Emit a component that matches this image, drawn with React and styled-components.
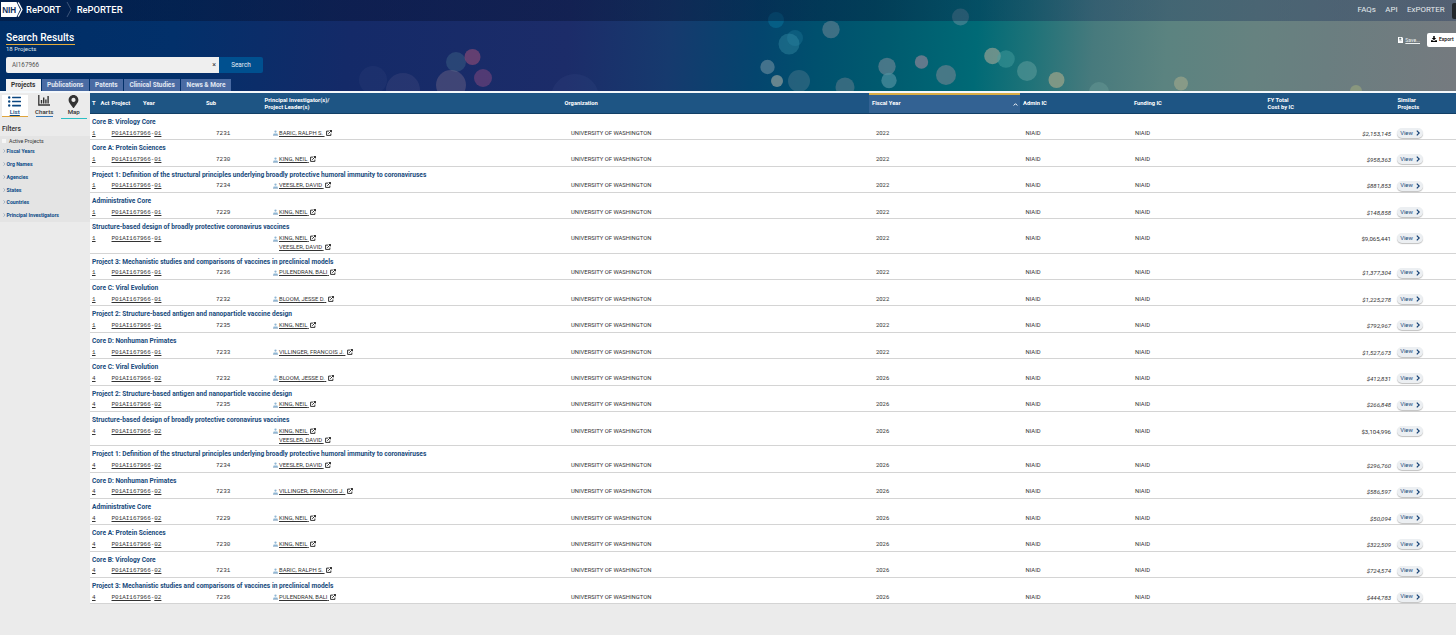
import React from 'react';
import styled, { createGlobalStyle } from 'styled-components';
import { FaListUl, FaMapMarkerAlt } from 'react-icons/fa';

const columns = '10px 11px 31px 62px 58px 300px 307px 151px 111px 134px 130px 1fr';

const titles = {
    7231: 'Core B: Virology Core',
    7230: 'Core A: Protein Sciences',
    7234: 'Project 1: Definition of the structural principles underlying broadly protective humoral immunity to coronaviruses',
    7229: 'Administrative Core',
    7236: 'Project 3: Mechanistic studies and comparisons of vaccines in preclinical models',
    7232: 'Core C: Viral Evolution',
    7235: 'Project 2: Structure-based antigen and nanoparticle vaccine design',
    7233: 'Core D: Nonhuman Primates',
};

const leaders = {
    7231: ['BARIC, RALPH S.'],
    7230: ['KING, NEIL'],
    7234: ['VEESLER, DAVID'],
    7229: ['KING, NEIL'],
    7236: ['PULENDRAN, BALI'],
    7232: ['BLOOM, JESSE D.'],
    7235: ['KING, NEIL'],
    7233: ['VILLINGER, FRANCOIS J.'],
};

const parentTitle = 'Structure-based design of broadly protective coronavirus vaccines';
const parentLeaders = ['KING, NEIL', 'VEESLER, DAVID'];

const projects = [
    { type: 1, sub: 7231, cost: '$2,153,145' },
    { type: 1, sub: 7230, cost: '$958,363' },
    { type: 1, sub: 7234, cost: '$881,853' },
    { type: 1, sub: 7229, cost: '$148,858' },
    { type: 1, cost: '$9,065,441' },
    { type: 1, sub: 7236, cost: '$1,377,304' },
    { type: 1, sub: 7232, cost: '$1,225,278' },
    { type: 1, sub: 7235, cost: '$792,967' },
    { type: 1, sub: 7233, cost: '$1,527,673' },
    { type: 4, sub: 7232, cost: '$412,831' },
    { type: 4, sub: 7235, cost: '$266,848' },
    { type: 4, cost: '$3,104,996' },
    { type: 4, sub: 7234, cost: '$296,760' },
    { type: 4, sub: 7233, cost: '$586,597' },
    { type: 4, sub: 7229, cost: '$50,094' },
    { type: 4, sub: 7230, cost: '$322,509' },
    { type: 4, sub: 7231, cost: '$724,574' },
    { type: 4, sub: 7236, cost: '$444,783' },
];

const filters = ['Fiscal Years', 'Org Names', 'Agencies', 'States', 'Countries', 'Principal Investigators'];

// x, y, radius, colour, opacity
const lights = [
    [456, 62, 10, '#4a7590', 0.35],
    [472.5, 57, 8, '#a05078', 0.55],
    [483, 78, 9, '#8a4a80', 0.5],
    [451, 85, 15, '#8a7590', 0.35],
    [403, 90, 17, '#6a6590', 0.2],
    [373, 80, 14, '#4a5590', 0.15],
    [575, 98, 24, '#50609a', 0.12],
    [776, 20, 8, '#0a80a8', 0.4],
    [789, 44, 10.5, '#3a90a8', 0.4],
    [795, 38, 8, '#3090b0', 0.25],
    [831, 29.5, 8.7, '#5f8090', 0.65],
    [767.5, 67, 7.2, '#5f8598', 0.7],
    [777, 81, 6, '#8a9a9a', 0.75],
    [799, 81, 11, '#5a7f90', 0.4],
    [845, 87, 9.5, '#6a7f90', 0.5],
    [887, 66.5, 8.7, '#5f8090', 0.75],
    [889, 80.5, 7.7, '#5090a0', 0.7],
    [921.5, 62, 6.7, '#7a7f92', 0.8],
    [946, 75, 10, '#5f7f8c', 0.75],
    [960.5, 17, 8.5, '#5a8a9a', 0.6],
    [992.5, 56, 8.3, '#829a90', 0.8],
    [1006, 59, 8.8, '#4aa0a0', 0.45],
    [1027, 71, 10, '#5a9a9a', 0.6],
    [1056.5, 80, 8, '#92a088', 0.8],
    [1099, 92, 10, '#6fa09a', 0.4],
    [1181, 83.5, 7, '#92a088', 0.8],
    [1356, 91, 6, '#93a07e', 0.75],
];

const PersonIcon = () => (
    <svg width="5" height="6" viewBox="0 0 10 12">
        <circle cx="5" cy="3.2" r="2.3" fill="#8fb6d3" />
        <path d="M.5 10V8.4Q.5 7 2 7h6q1.5 0 1.5 1.4V10z" fill="#8fb6d3" />
        <path d="M0 11.3h10" stroke="#6b8fb0" strokeWidth="1.2" />
    </svg>
);

const LinkOutIcon = () => (
    <svg width="6" height="6" viewBox="0 0 12 12" fill="none" stroke="#111" strokeWidth="1.7">
        <path d="M6 2.2H1.2v8.600h8.600V7M4.500 7.500L11 1M7.300 1H11v3.700" />
    </svg>
);

const ChartIcon = () => (
    <svg width="12" height="11" viewBox="0 0 12 11" stroke="#333" fill="none">
        <path d="M.8 0v10H12" strokeWidth="1.3" />
        <path d="M3.5 8.5V5M5.7 8.5V2.5M7.9 8.5V4.5M10.1 8.5V1" strokeWidth="1.4" />
    </svg>
);

const NihLogo = () => (
    <svg width="22" height="15" viewBox="0 0 22 15">
        <path d="M0 0h15.5l3.7 7.5-3.7 7.5H0z" fill="#fff" />
        <path d="M17.2.4l3.8 7.1-3.8 7.1" fill="none" stroke="#fff" strokeWidth="1.3" />
        <text x="1.2" y="10.9" fontSize="9.2" fontWeight="700" fontFamily="Liberation Sans, sans-serif" textLength="14" lengthAdjust="spacingAndGlyphs" fill="#10305c">NIH</text>
    </svg>
);

const App = () => {
    return (
        <Page>
            <GlobalStyle />
            <Hero>
                <Backdrop viewBox="0 0 1456 91">
                    {lights.map(([x, y, r, color, opacity]) => (
                        <circle key={`${x}-${y}`} cx={x} cy={y} r={r} fill={color} opacity={opacity} />
                    ))}
                </Backdrop>
                <Nav>
                    <Brand>
                        <NihLogo />
                        <BrandName>RePORT</BrandName>
                        <svg width="6" height="15" viewBox="0 0 6 15">
                            <path d="M1 0l4 7.5L1 15" fill="none" stroke="#3d5579" />
                        </svg>
                        <BrandName $wide>RePORTER</BrandName>
                    </Brand>
                    <NavLinks>
                        <NavLink>FAQs</NavLink>
                        <NavLink>API</NavLink>
                        <NavLink>ExPORTER</NavLink>
                        <NavMenu />
                    </NavLinks>
                </Nav>
                <HeroBody>
                    <div>
                        <Heading>Search Results</Heading>
                        <Count>18 Projects</Count>
                        <SearchBar>
                            <SearchField>
                                <span>AI167966</span>
                                <Clear>×</Clear>
                            </SearchField>
                            <SearchButton>Search</SearchButton>
                        </SearchBar>
                    </div>
                    <Actions>
                        <Save>
                            <svg width="5" height="6" viewBox="0 0 5 6">
                                <path d="M0 0h4l1 1v5H0z" fill="#fff" />
                                <path d="M1.5 1h1.5v1.3H1.5zM1.3 3.7h2.4" fill="#66797d" stroke="#66797d" strokeWidth=".5" />
                            </svg>
                            <u>Save...</u>
                        </Save>
                        <Export>
                            <svg width="6" height="6" viewBox="0 0 12 12">
                                <path d="M4.5 0h3v4h3L6 8.5 1.5 4h3zM0 8.5h3l3 2 3-2h3V12H0z" fill="#000" />
                            </svg>
                            Export
                        </Export>
                    </Actions>
                </HeroBody>
                <Tabs>
                    <Tab $active $width={34.5}>Projects</Tab>
                    <Tab $width={47}>Publications</Tab>
                    <Tab $width={33}>Patents</Tab>
                    <Tab $width={56}>Clinical Studies</Tab>
                    <Tab $width={49.5}>News &amp; More</Tab>
                </Tabs>
            </Hero>
            <Body>
                <Sidebar>
                    <Views>
                        <View $active $color="#e0a53c">
                            <FaListUl size={13} color="#0b4680" />
                            <u>List</u>
                        </View>
                        <View $color="#2f77b8" $narrow>
                            <ChartIcon />
                            <span>Charts</span>
                        </View>
                        <View $color="#2bbfc4" $low>
                            <FaMapMarkerAlt size={13} />
                            <span>Map</span>
                        </View>
                    </Views>
                    <FilterTitle>Filters</FilterTitle>
                    <FilterList>
                        <ActiveOnly><Checkbox />Active Projects</ActiveOnly>
                        {filters.map((name) => (
                            <Filter key={name}>
                                <svg width="3" height="4" viewBox="0 0 3 4">
                                    <path d="M.5.3L2 2 .5 3.7" fill="none" stroke="#7b93ab" strokeWidth=".6" />
                                </svg>
                                {name}
                            </Filter>
                        ))}
                    </FilterList>
                </Sidebar>
                <Table>
                    <HeadRow>
                        <Head>T</Head>
                        <Head $pad={0.5}>Act</Head>
                        <Head $pad={0.5}>Project</Head>
                        <Head $pad={1}>Year</Head>
                        <Head>Sub</Head>
                        <Head $pad={2.5}>Principal Investigator(s)/<br />Project Leader(s)</Head>
                        <Head $pad={2.5}>Organization</Head>
                        <Head $sorted $pad={3}>
                            Fiscal Year
                            <svg width="5" height="4" viewBox="0 0 5 4">
                                <path d="M.7 3.5L2.5 1.7 4.3 3.5" fill="none" stroke="#fff" strokeWidth="1" />
                            </svg>
                        </Head>
                        <Head $pad={3}>Admin IC</Head>
                        <Head $pad={3}>Funding IC</Head>
                        <Head $pad={2.5}>FY Total<br />Cost by IC</Head>
                        <Head $pad={2.5}>Similar<br />Projects</Head>
                    </HeadRow>
                    {projects.map(({ type, sub, cost }) => (
                        <Row key={`${type}-${sub}`} $tall={!sub}>
                            <Title>{titles[sub] || parentTitle}</Title>
                            <Cells>
                                <Code $pad={2}><u>{type}</u></Code>
                                <Code $from={3} $to={5} $pad={0.5}>
                                    <u>P01AI167966</u>-<u>{type === 1 ? '01' : '02'}</u>
                                </Code>
                                <Code $from={5} $pad={12}>{sub}</Code>
                                <Leaders>
                                    {(leaders[sub] || parentLeaders).map((name, i) => (
                                        <Leader key={name} $second={i > 0}>
                                            {i === 0 && <PersonIcon />}
                                            <u>{name}&nbsp;</u>
                                            <LinkOutIcon />
                                        </Leader>
                                    ))}
                                </Leaders>
                                <Cell $pad={9}>UNIVERSITY OF WASHINGTON</Cell>
                                <Cell $pad={7}>{type === 1 ? 2022 : 2026}</Cell>
                                <Cell $pad={5.5}>NIAID</Cell>
                                <Cell $pad={4}>NIAID</Cell>
                                <Cost $part={!!sub}>{cost}</Cost>
                                <ViewButton>
                                    View
                                    <svg width="4" height="6" viewBox="0 0 4 6">
                                        <path d="M.8.6L3.2 3 .8 5.4" fill="none" stroke="#123f73" strokeWidth="1.2" />
                                    </svg>
                                </ViewButton>
                            </Cells>
                        </Row>
                    ))}
                </Table>
            </Body>
        </Page>
    );
}

const GlobalStyle = createGlobalStyle`
    * {
        box-sizing: border-box;
    }
    body {
        margin: 0;
        background: #ebebeb;
        font-family: Roboto, "Liberation Sans", sans-serif;
        overflow: hidden;
    }
    svg {
        flex-shrink: 0;
    }
`;

const Page = styled.div`
    width: 1456px;
    height: 635px;
    overflow: hidden;
    white-space: nowrap;
`;

const Hero = styled.header`
    position: relative;
    display: flex;
    flex-direction: column;
    height: 93px;
    border-bottom: 2px solid #f4f8fb;
    background: linear-gradient(94deg, #002e66 0%, #02306a 12%, #142a68 24%, #1c2c69 39%, #163a6e 46%, #04456e 52%, #00506e 56%, #005b6f 61%, #006a76 67%, #1c7278 70.5%, #477a7d 75%, #5b8380 80%, #668280 86%, #6a7e80 91%, #757a7f 100%);
`;

const Backdrop = styled.svg`
    position: absolute;
    inset: 0;
    width: 1456px;
    height: 91px;
`;

const Nav = styled.nav`
    position: relative;
    display: flex;
    justify-content: space-between;
    height: 21px;
    background: linear-gradient(90deg, rgba(5, 12, 40, 0.4), rgba(5, 18, 50, 0.38) 60%, rgba(20, 45, 90, 0.34) 75%);
`;

const Brand = styled.div`
    display: flex;
    align-items: center;
    height: 19px;
    padding-left: 1px;
`;

const BrandName = styled.span`
    margin: 0 5px 0 ${({ $wide }) => ($wide ? 5 : 3)}px;
    padding-bottom: 1px;
    color: #fff;
    font-size: 9.4px;
    font-weight: 500;
    line-height: 17px;
`;

const NavLinks = styled.div`
    display: flex;
    align-items: center;
    gap: 9.5px;
    height: 18px;
`;

const NavLink = styled.a`
    position: relative;
    left: -1px;
    color: #e6ebee;
    font-size: 7.9px;
`;

const NavMenu = styled.span`
    width: 4px;
    height: 16px;
    margin: 3px 0 0 -3px;
    border-radius: 2px 0 0 2px;
    background: #23272b;
`;

const HeroBody = styled.div`
    position: relative;
    display: flex;
    flex: 1;
    justify-content: space-between;
    padding: 11px 0 0 6px;
`;

const Heading = styled.h1`
    width: 69px;
    height: 13px;
    margin: 0;
    border-bottom: 1px solid #e5ad3c;
    color: #fff;
    font-size: 10.2px;
    font-weight: 500;
    line-height: 12px;
`;

const Count = styled.div`
    height: 12px;
    color: #dfe6ee;
    font-size: 6px;
    line-height: 7px;
`;

const SearchBar = styled.div`
    display: flex;
    height: 16px;
`;

const SearchField = styled.div`
    display: flex;
    align-items: center;
    justify-content: space-between;
    width: 213px;
    padding: 0 3px 1px 6px;
    border-radius: 2px 0 0 2px;
    background: #efefef;
    color: #555;
    font-size: 6.3px;
`;

const Clear = styled.span`
    color: #333;
    font-size: 7px;
`;

const SearchButton = styled.button`
    width: 44px;
    padding: 0;
    border: 0;
    border-radius: 0 2px 2px 0;
    background: #00508f;
    color: #e4edf5;
    font: 6.4px Roboto, sans-serif;
`;

const Actions = styled.div`
    display: flex;
    align-items: center;
    gap: 7px;
    height: 16px;
`;

const Save = styled.span`
    display: flex;
    align-items: center;
    gap: 2px;
    color: #eef2f2;
    font-size: 5px;
`;

const Export = styled.span`
    display: flex;
    align-items: center;
    gap: 2px;
    width: 29px;
    height: 14px;
    padding: 0 0 2px 4px;
    border-radius: 2px 0 0 2px;
    background: #fff;
    color: #000;
    font-size: 5px;
    font-weight: 500;
`;

const Tabs = styled.div`
    position: relative;
    display: flex;
    gap: 1.2px;
    height: 12px;
    padding-left: 6px;
`;

const Tab = styled.span`
    width: ${({ $width }) => $width}px;
    background: ${({ $active }) => ($active ? '#f1f1f1' : '#4a6ba3')};
    color: ${({ $active }) => ($active ? '#333' : '#e3e9f3')};
    font-size: 6.5px;
    font-weight: 700;
    line-height: 12px;
    text-align: center;
`;

const Body = styled.main`
    display: flex;
`;

const Sidebar = styled.aside`
    width: 90px;
    color: #333;
`;

const Views = styled.div`
    display: flex;
    gap: 4px;
    padding: 2px 0 0 2px;
`;

const View = styled.div`
    display: flex;
    flex-direction: column;
    align-items: center;
    justify-content: space-between;
    width: ${({ $narrow }) => ($narrow ? 17.5 : 25.5)}px;
    height: ${({ $low }) => ($low ? 24 : 22)}px;
    margin: 0 ${({ $narrow }) => ($narrow ? 4 : 0)}px;
    padding-bottom: ${({ $low }) => ($low ? 2 : 0)}px;
    border-bottom: 1px solid ${({ $color }) => $color};
    background: ${({ $active }) => ($active ? '#fff' : 'transparent')};
    color: ${({ $active }) => ($active ? '#0b4680' : '#333')};
    font-size: 6.2px;
    font-weight: 500;
    line-height: 7px;
`;

const FilterTitle = styled.h2`
    margin: 3px 0 0 2px;
    font-size: 6.8px;
    font-weight: 500;
    line-height: 14px;
`;

const FilterList = styled.div`
    height: 86px;
    background: #e4e4e4;
`;

const ActiveOnly = styled.div`
    display: flex;
    align-items: center;
    gap: 3px;
    height: 9.4px;
    padding-left: 2px;
    font-size: 5.2px;
`;

const Checkbox = styled.span`
    width: 4px;
    height: 4px;
    background: #f6f6f6;
`;

const Filter = styled.div`
    display: flex;
    align-items: center;
    gap: 1px;
    height: 12.9px;
    padding: 0 0 2px 2.5px;
    color: #0b4b87;
    font-size: 5.2px;
    font-weight: 700;
`;

const Table = styled.section`
    flex: 1;
`;

const HeadRow = styled.div`
    display: grid;
    grid-template-columns: ${columns};
    height: 21px;
    border-bottom: 1px solid #123f66;
    background: #1e5584;
`;

const Head = styled.div`
    display: flex;
    align-items: center;
    justify-content: ${({ $sorted }) => ($sorted ? 'space-between' : 'flex-start')};
    padding: 1px 2px 0 ${({ $pad = 2 }) => $pad}px;
    background: ${({ $sorted }) => ($sorted ? '#336293' : 'transparent')};
    box-shadow: ${({ $sorted }) => ($sorted ? 'inset 0 2px #d9ad45' : 'none')};
    color: #fff;
    font-size: 5.8px;
    font-weight: 700;
    line-height: 6.6px;
`;

const Row = styled.div`
    height: ${({ $tall }) => ($tall ? 34.3 : 26.37)}px;
    border-bottom: 1px solid #d4d4d4;
    background: #fff;
`;

const Title = styled.div`
    height: 14.7px;
    padding: 2px 0 0 2px;
    color: #174a7c;
    font-size: 6.61px;
    font-weight: 700;
    line-height: 13px;
`;

const Cells = styled.div`
    display: grid;
    grid-template-columns: ${columns};
    color: #333;
    font-size: 5.86px;
    line-height: 9px;
`;

const Cell = styled.div`
    padding-left: ${({ $pad }) => $pad}px;
`;

const Code = styled.div`
    grid-column: ${({ $from = 1, $to }) => `${$from} / ${$to || $from + 1}`};
    padding-left: ${({ $pad = 1 }) => $pad}px;
    font-family: "Liberation Mono", monospace;
    font-size: 5.95px;
`;

const Leaders = styled.div`
    padding-left: 11px;
`;

const Leader = styled.div`
    display: flex;
    align-items: center;
    height: 9px;
    padding-left: ${({ $second }) => ($second ? 6 : 0)}px;

    svg:first-child {
        margin-right: 1px;
    }
    svg:last-child {
        margin: 0 0 1px 1.3px;
    }
`;

const Cost = styled.div`
    padding-right: 4px;
    font-size: 6.05px;
    font-style: ${({ $part }) => ($part ? 'italic' : 'normal')};
    text-align: right;
`;

const ViewButton = styled.a`
    display: flex;
    align-items: center;
    justify-content: center;
    gap: 3px;
    width: 26px;
    height: 10px;
    margin: -0.7px 0 0 2px;
    border-radius: 5px;
    background: #eceff2;
    box-shadow: 0 1px 1px rgba(0, 0, 0, 0.25);
    color: #174a7c;
`;

export default App;
